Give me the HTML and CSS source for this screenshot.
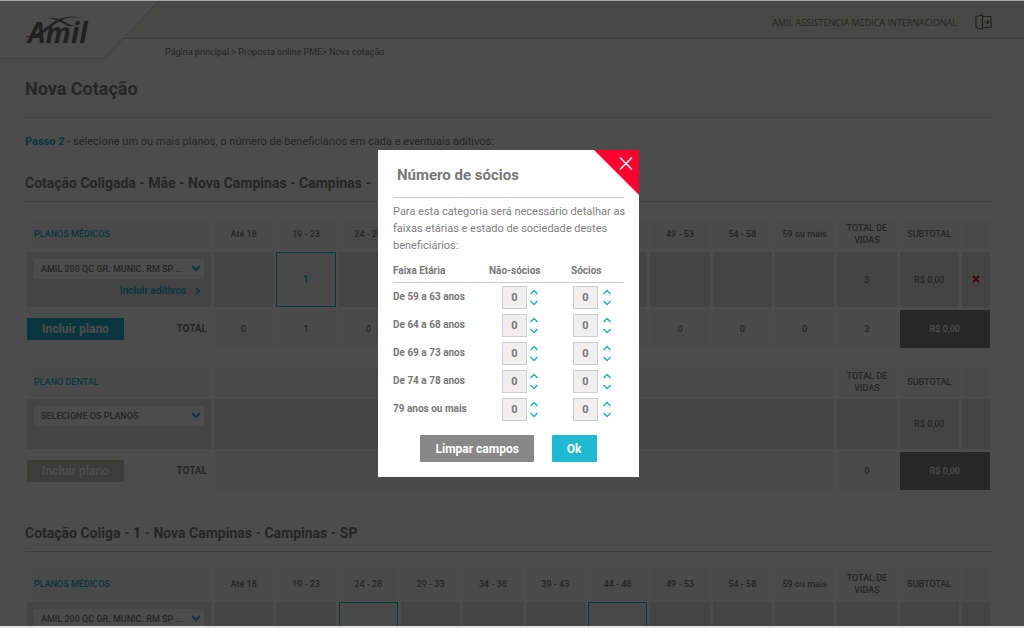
FILE: index.html
```html
<!DOCTYPE html>
<html lang="pt-BR">
<head>
<meta charset="utf-8">
<meta name="viewport" content="width=device-width, initial-scale=1">
<title>Nova Cotação</title>
<link rel="stylesheet" href="styles.css">
</head>
<body>
<div class="screen">
  <header class="header">
    <div class="topbar">
      <span class="account">AMIL ASSISTENCIA MEDICA INTERNACIONAL</span>
      <button class="exit" type="button" aria-label="Sair">
        <svg width="17" height="16" viewBox="0 0 17 16" fill="none" stroke="currentColor" stroke-width="1.2"><path d="M1 2.500 7.500 1v14L1 13.500zM7.500 2.500H16v11H7.500M9 8h5M12 6l2 2-2 2"/></svg>
      </button>
    </div>
    <a class="logo" href="#" aria-label="Amil">
      <svg width="160" height="60" viewBox="0 0 160 60">
        <path d="M0 0H159L104 57.500H0z" fill="#fff"/>
        <path d="M0 57.500H104L159 0" fill="none" stroke="#cfcfcf"/>
        <text x="28" y="42" class="logo-text">Amil</text>
        <path d="M25 34c4 3 10 0 16-4 9-6 15-13 27-14 5-.6 9 0 12 1-7-1-13-.5-18 2-9 4-14 11-22 15-6 3-12 4-15 0z" fill="#707070"/>
        <path d="M47 17c8-1 15 2 20 5 3 2 6 3 9 2-3 2-7 2-11-.5-6-3.500-11-6-18-6.500z" fill="#707070"/>
      </svg>
    </a>
    <nav class="crumbs" aria-label="Caminho"><a href="#">Página principal</a> &gt; <a href="#">Proposta online PME</a>&gt; <span>Nova cotação</span></nav>
  </header>

  <main class="content">
    <h1 class="page-title">Nova Cotação</h1>
    <p class="step"><strong>Passo 2</strong> - selecione um ou mais planos, o número de beneficiários em cada e eventuais aditivos:</p>

    <section class="quote">
      <h2 class="quote-title">Cotação Coligada - Mãe - Nova Campinas - Campinas -</h2>
      <table class="plans">
        <colgroup><col class="col-plan"><col span="12"><col class="col-remove"></colgroup>
        <thead>
          <tr><th class="plan-head">PLANOS MÉDICOS</th><th>Até 18</th><th>19 - 23</th><th>24 - 28</th><th></th><th></th><th></th><th></th><th>49 - 53</th><th>54 - 58</th><th>59 ou mais</th><th>TOTAL DE VIDAS</th><th>SUBTOTAL</th><td></td></tr>
        </thead>
        <tbody>
          <tr>
            <td class="plan-cell">
              <div class="select"><select aria-label="Plano médico"><option>AMIL 200 QC GR. MUNIC. RM SP ...</option></select><svg width="10" height="7" viewBox="0 0 10 7"><path d="M1 1l4 4 4-4"/></svg></div>
              <a class="extras" href="#">Incluir aditivos <svg width="6" height="8" viewBox="0 0 6 8"><path d="M1 1l3 3-3 3"/></svg></a>
            </td>
            <td><input class="lives" aria-label="Até 18"></td>
            <td class="filled"><input class="lives" aria-label="19 - 23" value="1"></td>
            <td><input class="lives" aria-label="24 - 28"></td>
            <td><input class="lives" aria-label="29 - 33"></td>
            <td><input class="lives" aria-label="34 - 38"></td>
            <td><input class="lives" aria-label="39 - 43"></td>
            <td><input class="lives" aria-label="44 - 48"></td>
            <td><input class="lives" aria-label="49 - 53"></td>
            <td><input class="lives" aria-label="54 - 58"></td>
            <td><input class="lives" aria-label="59 ou mais"></td>
            <td>3</td><td>R$ 0,00</td>
            <td><button class="remove" type="button" aria-label="Remover plano"><svg width="8" height="8" viewBox="0 0 8 8"><path d="M1 1l6 6M7 1L1 7"/></svg></button></td>
          </tr>
        </tbody>
        <tfoot>
          <tr><th class="total-cell"><div class="total"><button class="add" type="button">Incluir plano</button><span>TOTAL</span></div></th><td>0</td><td>1</td><td>0</td><td></td><td></td><td></td><td></td><td>0</td><td>0</td><td>0</td><td>3</td><td class="grand" colspan="2">R$ 0,00</td></tr>
        </tfoot>
      </table>

      <table class="plans dental">
        <colgroup><col class="col-plan"><col span="12"><col class="col-remove"></colgroup>
        <thead>
          <tr><th class="plan-head">PLANO DENTAL</th><td colspan="10"></td><th>TOTAL DE VIDAS</th><th>SUBTOTAL</th><td></td></tr>
        </thead>
        <tbody>
          <tr>
            <td class="plan-cell">
              <div class="select"><select aria-label="Plano dental"><option>SELECIONE OS PLANOS</option></select><svg width="10" height="7" viewBox="0 0 10 7"><path d="M1 1l4 4 4-4"/></svg></div>
            </td>
            <td colspan="10"></td><td></td><td>R$ 0,00</td><td></td>
          </tr>
        </tbody>
        <tfoot>
          <tr><th class="total-cell"><div class="total"><button class="add" type="button" disabled>Incluir plano</button><span>TOTAL</span></div></th><td colspan="10"></td><td>0</td><td class="grand" colspan="2">R$ 0,00</td></tr>
        </tfoot>
      </table>
    </section>

    <section class="quote linked">
      <h2 class="quote-title">Cotação Coliga - 1 - Nova Campinas - Campinas - SP</h2>
      <table class="plans">
        <colgroup><col class="col-plan"><col span="12"><col class="col-remove"></colgroup>
        <thead>
          <tr><th class="plan-head">PLANOS MÉDICOS</th><th>Até 18</th><th>19 - 23</th><th>24 - 28</th><th>29 - 33</th><th>34 - 38</th><th>39 - 43</th><th>44 - 48</th><th>49 - 53</th><th>54 - 58</th><th>59 ou mais</th><th>TOTAL DE VIDAS</th><th>SUBTOTAL</th><td></td></tr>
        </thead>
        <tbody>
          <tr>
            <td class="plan-cell">
              <div class="select"><select aria-label="Plano médico"><option>AMIL 200 QC GR. MUNIC. RM SP ...</option></select><svg width="10" height="7" viewBox="0 0 10 7"><path d="M1 1l4 4 4-4"/></svg></div>
            </td>
            <td></td><td></td><td class="filled"></td><td></td><td></td><td></td><td class="filled"></td><td></td><td></td><td></td><td></td><td></td><td></td>
          </tr>
        </tbody>
      </table>
    </section>
  </main>

  <div class="backdrop">
    <div class="modal" role="dialog" aria-modal="true" aria-labelledby="modal-title">
      <button class="close" type="button" aria-label="Fechar">
        <svg width="45" height="45" viewBox="0 0 45 45"><path d="M0 0H45V45z" fill="#ff0030"/><path d="M26 7.500L38 19.500M38 7.500L26 19.500" stroke="#fff" stroke-width="1.4"/></svg>
      </button>
      <h2 class="modal-title" id="modal-title">Número de sócios</h2>
      <p class="modal-text">Para esta categoria será necessário detalhar as faixas etárias e estado de sociedade destes beneficiários:</p>
      <table class="partners">
        <thead><tr><th class="age">Faixa Etária</th><th class="non">Não-sócios</th><th class="yes">Sócios</th></tr></thead>
        <tbody>
          <tr><th>De 59 a 63 anos</th>
            <td><div class="stepper"><input value="0" aria-label="Não-sócios de 59 a 63 anos"><span class="arrows"><button type="button" aria-label="Aumentar"><svg width="8" height="6" viewBox="0 0 8 6"><path d="M0.500 5L4 1.500 7.500 5"/></svg></button><button type="button" aria-label="Diminuir"><svg width="8" height="6" viewBox="0 0 8 6"><path d="M0.500 1L4 4.500 7.500 1"/></svg></button></span></div></td>
            <td><div class="stepper wide"><input value="0" aria-label="Sócios de 59 a 63 anos"><span class="arrows"><button type="button" aria-label="Aumentar"><svg width="8" height="6" viewBox="0 0 8 6"><path d="M0.500 5L4 1.500 7.500 5"/></svg></button><button type="button" aria-label="Diminuir"><svg width="8" height="6" viewBox="0 0 8 6"><path d="M0.500 1L4 4.500 7.500 1"/></svg></button></span></div></td></tr>
          <tr><th>De 64 a 68 anos</th>
            <td><div class="stepper"><input value="0" aria-label="Não-sócios de 64 a 68 anos"><span class="arrows"><button type="button" aria-label="Aumentar"><svg width="8" height="6" viewBox="0 0 8 6"><path d="M0.500 5L4 1.500 7.500 5"/></svg></button><button type="button" aria-label="Diminuir"><svg width="8" height="6" viewBox="0 0 8 6"><path d="M0.500 1L4 4.500 7.500 1"/></svg></button></span></div></td>
            <td><div class="stepper wide"><input value="0" aria-label="Sócios de 64 a 68 anos"><span class="arrows"><button type="button" aria-label="Aumentar"><svg width="8" height="6" viewBox="0 0 8 6"><path d="M0.500 5L4 1.500 7.500 5"/></svg></button><button type="button" aria-label="Diminuir"><svg width="8" height="6" viewBox="0 0 8 6"><path d="M0.500 1L4 4.500 7.500 1"/></svg></button></span></div></td></tr>
          <tr><th>De 69 a 73 anos</th>
            <td><div class="stepper"><input value="0" aria-label="Não-sócios de 69 a 73 anos"><span class="arrows"><button type="button" aria-label="Aumentar"><svg width="8" height="6" viewBox="0 0 8 6"><path d="M0.500 5L4 1.500 7.500 5"/></svg></button><button type="button" aria-label="Diminuir"><svg width="8" height="6" viewBox="0 0 8 6"><path d="M0.500 1L4 4.500 7.500 1"/></svg></button></span></div></td>
            <td><div class="stepper wide"><input value="0" aria-label="Sócios de 69 a 73 anos"><span class="arrows"><button type="button" aria-label="Aumentar"><svg width="8" height="6" viewBox="0 0 8 6"><path d="M0.500 5L4 1.500 7.500 5"/></svg></button><button type="button" aria-label="Diminuir"><svg width="8" height="6" viewBox="0 0 8 6"><path d="M0.500 1L4 4.500 7.500 1"/></svg></button></span></div></td></tr>
          <tr><th>De 74 a 78 anos</th>
            <td><div class="stepper"><input value="0" aria-label="Não-sócios de 74 a 78 anos"><span class="arrows"><button type="button" aria-label="Aumentar"><svg width="8" height="6" viewBox="0 0 8 6"><path d="M0.500 5L4 1.500 7.500 5"/></svg></button><button type="button" aria-label="Diminuir"><svg width="8" height="6" viewBox="0 0 8 6"><path d="M0.500 1L4 4.500 7.500 1"/></svg></button></span></div></td>
            <td><div class="stepper wide"><input value="0" aria-label="Sócios de 74 a 78 anos"><span class="arrows"><button type="button" aria-label="Aumentar"><svg width="8" height="6" viewBox="0 0 8 6"><path d="M0.500 5L4 1.500 7.500 5"/></svg></button><button type="button" aria-label="Diminuir"><svg width="8" height="6" viewBox="0 0 8 6"><path d="M0.500 1L4 4.500 7.500 1"/></svg></button></span></div></td></tr>
          <tr><th>79 anos ou mais</th>
            <td><div class="stepper"><input value="0" aria-label="Não-sócios de 79 anos ou mais"><span class="arrows"><button type="button" aria-label="Aumentar"><svg width="8" height="6" viewBox="0 0 8 6"><path d="M0.500 5L4 1.500 7.500 5"/></svg></button><button type="button" aria-label="Diminuir"><svg width="8" height="6" viewBox="0 0 8 6"><path d="M0.500 1L4 4.500 7.500 1"/></svg></button></span></div></td>
            <td><div class="stepper wide"><input value="0" aria-label="Sócios de 79 anos ou mais"><span class="arrows"><button type="button" aria-label="Aumentar"><svg width="8" height="6" viewBox="0 0 8 6"><path d="M0.500 5L4 1.500 7.500 5"/></svg></button><button type="button" aria-label="Diminuir"><svg width="8" height="6" viewBox="0 0 8 6"><path d="M0.500 1L4 4.500 7.500 1"/></svg></button></span></div></td></tr>
        </tbody>
      </table>
      <div class="actions"><button class="btn clear" type="button">Limpar campos</button><button class="btn ok" type="button">Ok</button></div>
    </div>
  </div>
</div>
</body>
</html>
```

FILE: styles.css
```css
* { box-sizing: border-box; }
body { margin: 0; font-family: Roboto, "Noto Sans", sans-serif; font-size: 11px; color: #808080; background: #fff; }
button, input, select { font: inherit; color: inherit; margin: 0; padding: 0; border: 0; background: none; border-radius: 0; }
button { cursor: pointer; }
a { color: inherit; text-decoration: none; }
h1, h2, p { margin: 0; }
svg { display: block; }

.screen { position: relative; height: 100vh; overflow: hidden; border-top: 1px solid #a3aaa6; border-bottom: 2px solid #e4e4e4; }

.header { position: relative; }
.topbar { display: flex; justify-content: flex-end; align-items: center; gap: 18px; height: 38px; padding: 5px 32px 0 0; background: #f0f0ea; border-bottom: 1px solid #c8c8c8; }
.account { font-family: "Open Sans", sans-serif; font-size: 9px; }
.exit { color: #707070; }
.logo { position: absolute; left: 0; top: 0; }
.logo-text { font: italic bold 28px "Open Sans", sans-serif; fill: #707070; }
.crumbs { padding-left: 165px; font-size: 9px; line-height: 12px; margin-top: 7px; }

.content { padding: 0 32px 0 25px; }
.page-title { margin-top: 18px; padding: 3px 0 18px; font-size: 18px; line-height: 20px; border-bottom: 1px solid #d0d0d0; }
.step { margin-top: 16px; line-height: 16px; }
.step strong { color: #1fb9d3; }
.quote { padding-top: 24px; }
.linked { padding-top: 31px; }
.quote-title { padding: 0 0 9px; font-size: 14px; line-height: 18px; border-bottom: 1px solid #d4d4d4; }

.plans { width: calc(100% + 2px); margin: 14px 0 0 -1px; table-layout: fixed; border-spacing: 3px; font-size: 9px; line-height: 12px; font-weight: 500; text-align: center; }
.plans th, .plans td { padding: 0; background: #e3e3e3; }
.plans th { font-weight: 500; }
.plans thead th, .plans thead td { height: 30px; background: #f8f8f8; }
.plans tbody td { height: 55px; }
.plans tfoot th, .plans tfoot td { height: 38px; background: #f8f8f8; }
.plans .plan-head { padding-left: 7px; text-align: left; color: #1fb9d3; }
.plans .total-cell { background: none; }
.plans tfoot .grand { background: #858585; color: #fff; }
.plans tbody .filled { background: #f6f6f6; border: 1px solid #1fb9d3; color: #1fb9d3; }
.col-plan { width: 184px; }
.col-remove { width: 28px; }
.plans .plan-cell { padding: 7px; text-align: left; vertical-align: top; }
.select { position: relative; }
.select select { display: block; width: 100%; height: 20px; padding-left: 7px; appearance: none; background: #fff; }
.select svg { position: absolute; right: 3px; top: 6px; }
.select path, .extras path { fill: none; stroke: #1fb9d3; stroke-width: 2; }
.extras { display: flex; justify-content: flex-end; align-items: center; gap: 9px; margin-top: 6px; padding-right: 3px; font-size: 10px; font-weight: 700; color: #1fb9d3; }
.lives { display: block; width: 100%; height: 24px; text-align: center; }
.filled .lives { font-size: 10px; font-weight: 700; }
.remove path { fill: none; stroke: #ff0030; stroke-width: 2; }
.total { display: flex; justify-content: space-between; align-items: center; padding-right: 4px; font-size: 10px; font-weight: 700; }
.add { width: 97px; height: 22px; background: #1fb9d3; color: #fff; font-size: 12px; font-weight: 700; }
.add:disabled { background: #c8c8c0; color: #fff; }
.dental thead th, .dental thead td { height: 28px; }
.dental tbody td { height: 50px; }

.backdrop { position: absolute; inset: 0; display: flex; align-items: center; justify-content: center; padding-right: 7px; background: rgba(0, 0, 0, .7); }
.modal { position: relative; width: 261px; padding: 15px; background: #fff; }
.close { position: absolute; right: 0; top: 0; }
.modal-title { padding: 0 4px 11px; font-size: 15px; line-height: 21px; color: #777; border-bottom: 1px solid #ccc; }
.modal-text { margin-right: -6px; padding-top: 5px; line-height: 17px; }
.partners { width: 100%; margin-top: 8px; border-collapse: collapse; table-layout: fixed; font-size: 10px; text-align: left; color: #777; }
.partners th, .partners td { padding: 0; }
.partners thead th { height: 20px; line-height: 17px; vertical-align: top; border-bottom: 1px solid #ccc; }
.partners .age { width: 96px; }
.partners .non { width: 82px; }
.partners tbody th { height: 28px; }
.partners tbody td { padding-top: 3px; }
.stepper { display: flex; align-items: center; gap: 3px; padding-left: 13px; }
.stepper.wide { gap: 5px; padding-left: 2px; }
.stepper input { width: 25px; height: 23px; border: 1px solid #ccc; background: #f0eeee; text-align: center; font-size: 11px; font-weight: 700; }
.arrows { display: grid; gap: 5px; }
.arrows path { fill: none; stroke: #1fb0c8; stroke-width: 1.5; }
.actions { display: flex; justify-content: center; gap: 18px; margin-top: 13px; }
.btn { height: 27px; padding: 0 15px; color: #fff; font-size: 12px; font-weight: 700; border-radius: 1px; }
.clear { background: #888; }
.ok { background: #1fb9d3; }
```
